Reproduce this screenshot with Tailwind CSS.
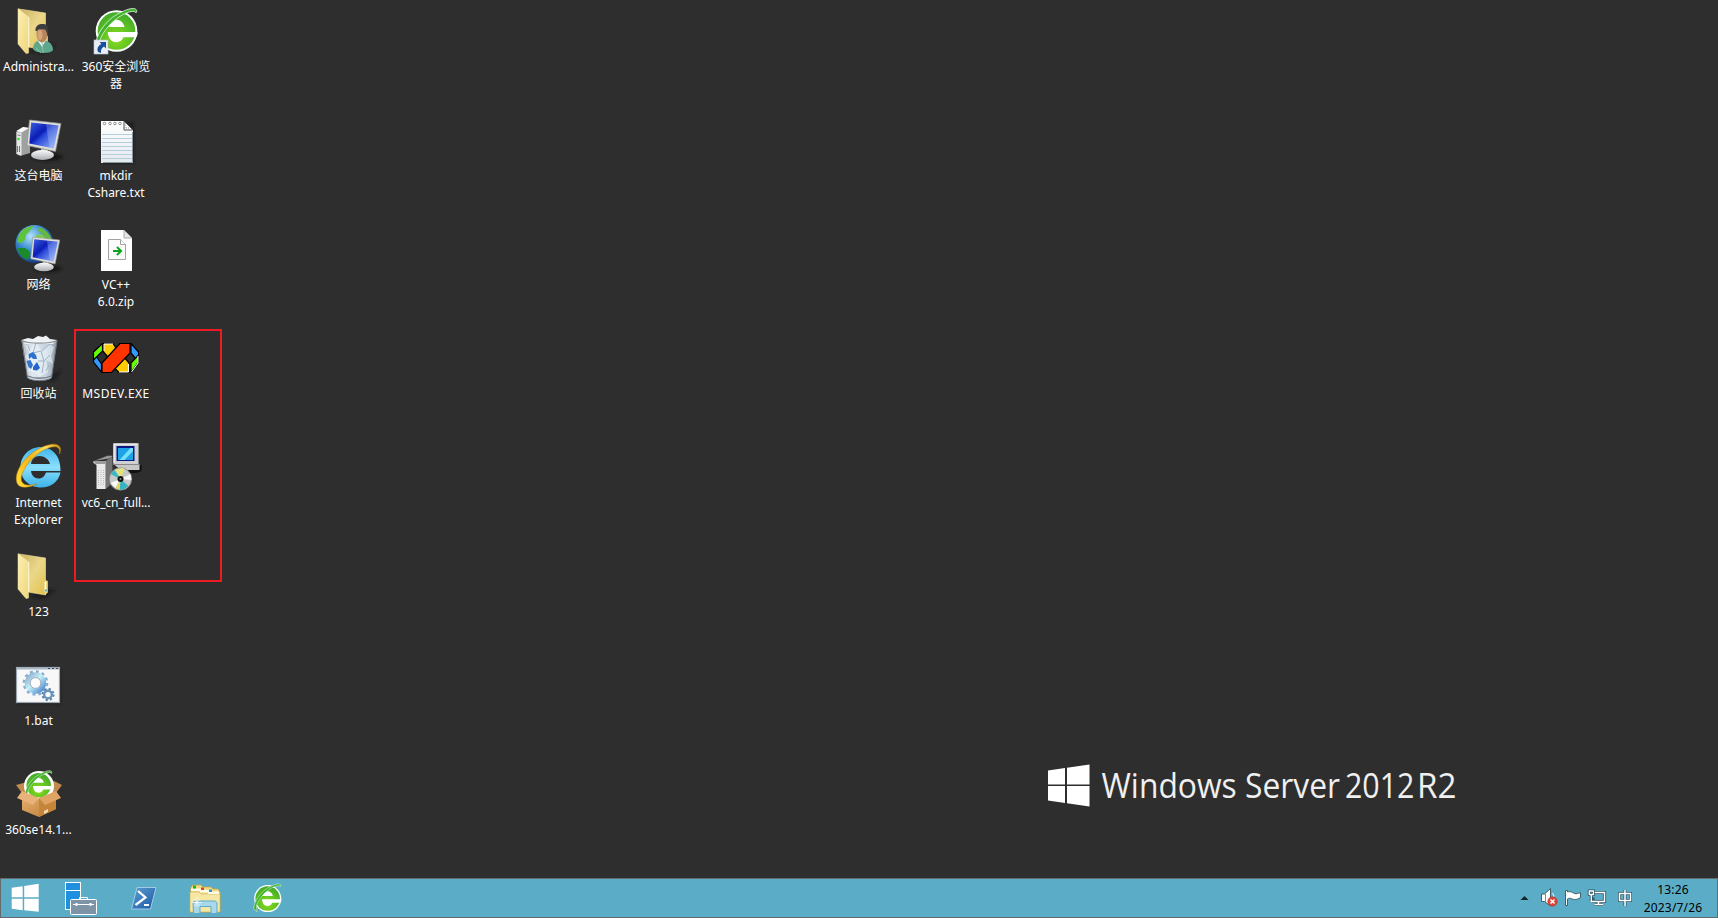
<!DOCTYPE html>
<html lang="zh-CN">
<head>
<meta charset="utf-8">
<title>Desktop</title>
<script src="https://cdn.jsdelivr.net/npm/@tailwindcss/browser@4"></script>
</head>
<body class="bg-[#2e2e2e] overflow-hidden">
<svg width="0" height="0" class="absolute">
  <defs>
    <linearGradient id="fold" x1="0" y1="0" x2="1" y2="1"><stop offset="0" stop-color="#c9b060"/><stop offset=".5" stop-color="#ead78a"/><stop offset="1" stop-color="#e3c24c"/></linearGradient>
    <linearGradient id="flap" x1="0" y1="0" x2="1" y2="1"><stop offset="0" stop-color="#fbf0b4"/><stop offset="1" stop-color="#f0d67c"/></linearGradient>
    <linearGradient id="scr" x1="0" y1="0" x2="1" y2="1"><stop offset="0" stop-color="#3d63e0"/><stop offset=".4" stop-color="#0a1cb4"/><stop offset=".5" stop-color="#2a48d8"/><stop offset="1" stop-color="#a8c4fa"/></linearGradient>
    <linearGradient id="metal" x1="0" y1="0" x2="0" y2="1"><stop offset="0" stop-color="#fafafa"/><stop offset="1" stop-color="#a9adb2"/></linearGradient>
    <radialGradient id="globe" cx=".4" cy=".3" r=".7"><stop offset="0" stop-color="#b4e2fa"/><stop offset=".5" stop-color="#3c8fd0"/><stop offset="1" stop-color="#153f86"/></radialGradient>
    <radialGradient id="green" cx=".5" cy=".7" r=".7"><stop offset="0" stop-color="#8ade1e"/><stop offset="1" stop-color="#3fa928"/></radialGradient>
    <linearGradient id="ie" x1="0" y1="0" x2="0" y2="1"><stop offset="0" stop-color="#3fb4ea"/><stop offset=".5" stop-color="#8ae0fd"/><stop offset="1" stop-color="#3cb2ea"/></linearGradient>
    <linearGradient id="gold" x1="0" y1="1" x2="1" y2="0"><stop offset="0" stop-color="#ffdf3c"/><stop offset=".5" stop-color="#f5b414"/><stop offset=".8" stop-color="#ffe25a"/><stop offset="1" stop-color="#c98a0c"/></linearGradient>
    <linearGradient id="gear" x1="0" y1="0" x2="1" y2="1"><stop offset="0" stop-color="#8fabc9"/><stop offset=".45" stop-color="#c4f2fa"/><stop offset="1" stop-color="#4a86cc"/></linearGradient>
    <linearGradient id="ps" x1="0" y1="0" x2="1" y2="1"><stop offset="0" stop-color="#5f9fd0"/><stop offset="1" stop-color="#1758a8"/></linearGradient>
    <linearGradient id="box" x1="0" y1="0" x2="1" y2="1"><stop offset="0" stop-color="#e8b070"/><stop offset="1" stop-color="#bd7f38"/></linearGradient>
    <linearGradient id="paper" x1="0" y1="0" x2="0" y2="1"><stop offset="0" stop-color="#ffffff"/><stop offset="1" stop-color="#e4e9ee"/></linearGradient>
    <linearGradient id="bin" x1="0" y1="0" x2="1" y2="0"><stop offset="0" stop-color="#aeb8c2"/><stop offset=".3" stop-color="#dfe8f0"/><stop offset=".7" stop-color="#c5d2de"/><stop offset="1" stop-color="#8d99a5"/></linearGradient>
    <filter id="soft" x="-50%" y="-50%" width="200%" height="200%"><feGaussianBlur stdDeviation="1.6"/></filter>
    <symbol id="folder" viewBox="0 0 40 50" overflow="visible">
      <path d="M10 43L32 36L38 37L26 46z" fill="#1c1c1c" filter="url(#soft)"/>
      <path d="M1 1L27.500 5V42L10 39z" fill="url(#fold)" stroke="#f3e3a0" stroke-width=".6"/>
      <path d="M27 27l2.800 1v11.500L27 42z" fill="#f3dd85"/>
      <path d="M27.300 29v10" stroke="#fff" stroke-width="1.400"/>
      <path d="M26.800 37.500h2" stroke="#48a8d8" stroke-width="2"/>
      <path d="M0 .5L10.500 9V45L8 45.500L0 36z" fill="url(#flap)" stroke="#f7e9a8" stroke-width=".5"/>
      <path d="M10.800 9v30" stroke="#fffbe0" stroke-width=".9"/>
    </symbol>
    <symbol id="e360" viewBox="0 0 44 46" overflow="visible">
      <circle cx="21.500" cy="23.500" r="21.300" fill="#fff"/>
      <circle cx="21.500" cy="23.500" r="19.300" fill="url(#green)"/>
      <path d="M13 19.500C14 14.800 17.500 12 21.300 12S28.800 14.800 29.600 19.500z" fill="#fff"/>
      <path d="M12.500 24.500H43V27L41.800 30H28.500C27.200 33.400 24.500 35 21.300 35C16.500 35 13 31 12.500 24.500z" fill="#fff"/>
      <path d="M-.5 38C1 28 9 14 22 6.500C31 1.300 39.500-1.500 42 2C42.500 3 42 4 41.500 5C40 2.200 34 3.500 27 7.300C16 13.500 7 25 4.500 33C3.700 36 4 40 5 44C2 42-.5 41-.5 38z" fill="#40b32a" stroke="#fff" stroke-width=".7"/>
    </symbol>
    <symbol id="monitor" viewBox="0 0 34 42" overflow="visible">
      <ellipse cx="20" cy="37" rx="16" ry="4" fill="#171717" filter="url(#soft)"/>
      <path d="M14 28L21 29L20 36H14z" fill="#b5b9bd"/>
      <ellipse cx="15.500" cy="35" rx="11.500" ry="5" fill="url(#metal)"/>
      <path d="M2.500 0L34 3.500L28.500 31.500L0 25.500z" fill="#dddeda" stroke="#8f928f" stroke-width=".7"/>
      <path d="M4.200 2.500L31.500 5.500L26.800 28.500L2.300 23.600z" fill="url(#scr)"/>
      <path d="M19 4.200L31.500 5.500L26.800 28.500L22.500 27.600z" fill="#bed5ff" opacity=".3"/>
    </symbol>
  </defs>
</svg>

<main class="relative flex h-[918px] w-[1718px] flex-col font-['Noto_Sans','Noto_Sans_CJK_SC',sans-serif] text-white">
  <section class="flex h-[878px] pt-1 text-center text-[12px] leading-[17px]">
    <div class="grid w-[77px] auto-rows-[109px] content-start">
      <div>
        <svg width="77" height="52">
          <use href="#folder" x="18" y="4" width="40" height="50"/>
          <path d="M33 45C33 39 37 36 42 36S53 39 53 46C51 50 36 50 33 45z" fill="#5fa68c"/>
          <path d="M38 37L42 43L46 36z" fill="#f2f2ee"/>
          <path d="M36 44L41 49M42 37L43 49" stroke="#8dcbb4" stroke-width=".8"/>
          <ellipse cx="42" cy="30" rx="5.500" ry="8.500" fill="#b7855c"/>
          <ellipse cx="40" cy="31" rx="2.500" ry="5" fill="#d5a67c"/>
          <path d="M35.500 27C35 21 40 19.500 43.500 20C48 20.500 49.500 25 47.500 32C47 29 46.500 27 45 25.500C41.500 25.500 38 24.500 37 27z" fill="#3b3d40"/>
        </svg>
        <p class="mt-[2px] whitespace-nowrap">Administra...</p>
      </div>
      <div>
        <svg width="77" height="52">
          <path d="M16.500 18L23 14L30 15V40L20 43L16.500 41z" fill="#9ea0a2"/>
          <path d="M16.500 19L21.500 20V42.500L16.500 41z" fill="#e5e6e6"/><path d="M16.500 18L23 14L29 15L21.500 19.500z" fill="#fafafa"/>
          <path d="M17.500 22l3 .5M17.500 33v6M19.500 33v6" stroke="#777" stroke-width="1"/><circle cx="18.500" cy="26" r="1.300" fill="#28e818"/>
          <use href="#monitor" x="27" y="7" width="34" height="42"/>
        </svg>
        <p class="mt-[2px]">这台电脑</p>
      </div>
      <div>
        <svg width="77" height="52">
          <circle cx="34.500" cy="22" r="19" fill="url(#globe)"/>
          <path d="M19 13C22 7 29 4 34 4L31 7L29 10L26 13L25 18L21 21L17 20z" fill="#5fc43b"/>
          <path d="M39 5C45 7 50 12 52 18L46 16L43 12L38 9z" fill="#68b63c"/>
          <path d="M18 26L25 26L30 30L28 38C22 36 18 31 18 26z" fill="#1b8b28"/>
          <path d="M36 13L42 12L47 17H35z" fill="#80cc52"/>
          <use href="#monitor" x="30.500" y="15" width="29.500" height="36"/>
        </svg>
        <p class="mt-[2px]">网络</p>
      </div>
      <div>
        <svg width="77" height="52">
          <path d="M50 45L62 38L55 49L45 51z" fill="#1c1c1c" filter="url(#soft)"/>
          <path d="M21.500 10H57L51.500 47C47 50.500 32 50.500 27.500 47z" fill="url(#bin)"/>
          <path d="M21.500 9L28 7L33 8L38 5L43 6L46 4.500L50 8L57 9L53 13H25z" fill="#eff3f6"/>
          <path d="M24 13L31 18L36 12L42 20L49 13L54 16L51 25L53 33L46 29L48 41L39 46L34 41L28 40L30 31L25 26L29 21z" fill="#f1f7fc" opacity=".55"/>
          <path d="M36 12L33 22L41 20L44 30L50 24M42 20L50 13M42 42L44 30L38 30M28 15L30 20M46 40L49 34" fill="none" stroke="#9fb2c6" stroke-width="1"/>
          <path d="M21.300 9.500C28 13 50 13 57.200 9.500" fill="none" stroke="#878e95" stroke-width="1.300"/>
          <path d="M22 10L27.500 47C33 50.500 46 50.500 51.500 47L57 10" fill="none" stroke="#6b737b" stroke-width="1"/>
          <path d="M28 45C34 48 45 48 51 45" stroke="#72797f" stroke-width="1.300" fill="none"/>
          <path d="M28.500 23L33 21L36 24L37 28L33 28L31.500 26L29 28z" fill="#2c70d0"/>
          <path d="M26.500 30L30.500 29L33 34L31 38L28.500 36z" fill="#3474cf"/>
          <path d="M33 36L37 31L40 37L37 39.500L33 39z" fill="#2365c9"/>
        </svg>
        <p class="mt-[2px]">回收站</p>
      </div>
      <div>
        <svg width="77" height="52">
          <path d="M60.500 32.500H46C44.500 37 41.500 38.500 38.500 38.500C34.500 38.500 31.500 35.500 31 31H60.500C61 16 52 7 41 7C29 7 20.500 16 20.500 27.500C20.500 39 29 47.500 41 47.500C51 47.500 58.500 41.500 60.500 32.500zM31 24C31.500 19 35 16 39.500 16S49 19 50 24z" fill="url(#ie)"/>
          <path d="M59.500 14C63 5.500 57 1.500 45 6C27 12.500 13 31 17 43C19 49 29 48 37 44C30 46 24 45.500 22 42C18 34 32 15 46 9C55 5 61 6 59.500 14z" fill="url(#gold)" stroke="#b77b0a" stroke-width=".5"/>
        </svg>
        <p class="mt-[2px]">Internet<br><span class="tracking-[0.2px]">Explorer</span></p>
      </div>
      <div>
        <svg width="77" height="52"><use href="#folder" x="18" y="4" width="40" height="50"/></svg>
        <p class="mt-[2px]">123</p>
      </div>
      <div>
        <svg width="77" height="52">
          <rect x="17" y="11" width="44" height="35" fill="#191919" opacity=".6" filter="url(#soft)"/>
          <rect x="16.500" y="9.500" width="43" height="35" fill="#f8f8f8" stroke="#9ba5b0" stroke-width="1.200"/>
          <path d="M17 10.500H59" stroke="#aab7c5" stroke-width="2"/><path d="M48 10.500h2M52 10.500h2M56 10.500h2" stroke="#3e4a58" stroke-width="1"/>
          <circle cx="35.500" cy="25" r="11.500" fill="none" stroke="#86aed2" stroke-width="2.600" stroke-dasharray="3.010 3.010"/>
          <circle cx="35.500" cy="25" r="8.200" fill="none" stroke="url(#gear)" stroke-width="5"/>
          <circle cx="35.500" cy="25" r="5.400" fill="#fcfcfc" stroke="#7c92aa" stroke-width=".8"/>
          <circle cx="48" cy="36.500" r="5.500" fill="none" stroke="#547da7" stroke-width="2" stroke-dasharray="2.160 2.160"/>
          <circle cx="48" cy="36.500" r="3.800" fill="#fcfcfc" stroke="#6894bd" stroke-width="2.400"/>
        </svg>
        <p class="mt-[2px]">1.bat</p>
      </div>
      <div>
        <svg width="77" height="52">
          <path d="M16 18L31 14L39 19L54 14L62 18L56 26H22z" fill="#c08a50"/>
          <circle cx="39" cy="19" r="15" fill="#fff"/>
          <use href="#e360" x="25" y="3" width="28" height="30"/>
          <path d="M22 27L39 32L56 26V42L39 50L22 43z" fill="url(#box)"/><path d="M39 31L56 26V42L39 50z" fill="#c58639"/>
          <path d="M22 24L39 31L33 38L17 31z" fill="#e8b279"/><path d="M56 24L39 31L45 38L61 31z" fill="#e0a465"/>
          <path d="M44 44L48 42V45L44 47z" fill="#f0d9b5"/>
        </svg>
        <p class="mt-[2px] whitespace-nowrap">360se14.1...</p>
      </div>
    </div>
    <div class="grid w-[78px] auto-rows-[109px] content-start">
      <div>
        <svg width="78" height="52">
          <use href="#e360" x="18.500" y="4" width="43" height="45"/>
          <rect x="17" y="36" width="14" height="14" fill="#e9eef5" stroke="#b9c4d0" stroke-width=".6"/>
          <path d="M22.500 38H29V44.500L27 42.500C24.500 44 23.500 46 24 49L21 48C19.500 44 21.500 41.500 24.500 40z" fill="#194f9a"/>
        </svg>
        <p class="mt-[2px] px-1">360安全浏览<br>器</p>
      </div>
      <div>
        <svg width="78" height="52">
          <g transform="translate(1 0)">
            <rect x="24" y="9" width="32" height="42" fill="#171717" opacity=".6" filter="url(#soft)"/>
            <path d="M23 8H46L55 17V50H23z" fill="url(#paper)"/>
            <path d="M24 21.500H54M24 25.500H54M24 29.500H54M24 33.500H54M24 37.500H54M24 41.500H54M24 45.500H54" stroke="#b4cede" stroke-width="1"/>
            <path d="M25 49.500H54.500V19" stroke="#8d979e" stroke-width="1" fill="none"/>
            <path d="M46 8V17H55z" fill="#fafafa" stroke="#4b5054" stroke-width="1"/>
            <path d="M47 10V15H52" stroke="#858b90" stroke-width="1" stroke-dasharray="1 1" fill="none"/>
            <g fill="none" stroke="#777" stroke-width=".8"><circle cx="26.500" cy="10.500" r="1.300"/><circle cx="32" cy="10.500" r="1.300"/><circle cx="37" cy="10.500" r="1.300"/><circle cx="42" cy="10.500" r="1.300"/></g>
          </g>
        </svg>
        <p class="mt-[2px]">mkdir<br>Cshare.txt</p>
      </div>
      <div>
        <svg width="78" height="52">
          <g transform="translate(1 0)">
            <path d="M23 8H46L54 16V49H23z" fill="#fff"/>
            <path d="M46 8V16H54z" fill="#e6e6e6" stroke="#999" stroke-width=".8"/>
            <path d="M30.500 17.500H42.500L47.500 22.500V37.500H30.500z" fill="#fafafa" stroke="#a3a3a3"/>
            <path d="M42.500 17.500V22.500H47.500" fill="#fff" stroke="#a3a3a3"/>
            <path d="M35 29H42M39 25L43 29L39 33" fill="none" stroke="#0aa41c" stroke-width="2"/>
          </g>
        </svg>
        <p class="mt-[2px]">VC++<br>6.0.zip</p>
      </div>
      <div>
        <svg width="78" height="52">
          <g stroke="#000" stroke-width="1.200" stroke-linejoin="round">
            <path d="M17 22L24.500 33V41L16.500 31z" fill="#3399ff"/>
            <path d="M16.500 29L25.500 20V12.500L16.500 21z" fill="#66ff00"/>
            <path d="M54 12.500L61.500 21V31L54 22z" fill="#3399ff"/>
            <path d="M61.500 24V31L54 41.500V32z" fill="#66ff00"/>
            <path d="M26.500 12.500H36L39 17L31 26L26.500 21z" fill="#ffcc00"/>
            <path d="M47 26L52 32V41.500H42L37.500 37z" fill="#ffcc00"/>
            <path d="M43 12.500H53V22L34.500 41.500H25V32z" fill="#ff3300"/>
          </g>
          <path d="M27 20V13H36M42 41H51.500V33M54.500 41L61 32V25" fill="none" stroke="#fff" stroke-width="1"/>
        </svg>
        <p class="mt-[2px] whitespace-nowrap tracking-[0.5px]">MSDEV.EXE</p>
      </div>
      <div>
        <svg width="78" height="52">
          <g transform="translate(1.500 0)">
            <path d="M36 25H63V31L58 33H44z" fill="#111"/><path d="M35 24L61 24V30H42z" fill="#c8c8c8"/>
            <rect x="35" y="3.500" width="25" height="21" fill="#cfd0d2" stroke="#888" stroke-width="1"/><path d="M35.500 23V4H59" stroke="#fff" fill="none"/>
            <rect x="38" y="6" width="18" height="15" fill="#0b1783"/><rect x="39.500" y="8" width="15" height="12" fill="#1da2e5"/><path d="M41 20L52 8H54.500V11L46 20z" fill="#74e0fa"/>
            <path d="M15 21L29 15.500H34V17L27 21V49L34 43V18" fill="#999" stroke="#333" stroke-width=".5"/>
            <path d="M27 21L33.500 17V43L27 49z" fill="#747474"/>
            <path d="M15 21H27V49H18V25L15 23z" fill="#e9e9e9"/><path d="M15 21H27V24H17z" fill="#9b9b9b"/>
            <path d="M20 30V46M22.500 30V46M25 30V46" stroke="#bbb" stroke-width="1" stroke-dasharray="1 1"/>
            <circle cx="42" cy="39" r="11.200" fill="#c6c9c8" stroke="#777" stroke-width=".7"/>
            <path d="M42 39L37 29.500L44 28L46 29z" fill="#e6e27a"/><path d="M42 39L32 34L36 30z" fill="#38b8c4"/><path d="M42 39L50 46L45 49.500L41 50z" fill="#38b4c0"/><path d="M42 39L52 34L53 40z" fill="#f7f7f7"/><path d="M42 39L32 43L37 48z" fill="#fafafa"/><path d="M42 39L41 50L37 48z" fill="#e1d66a"/>
            <circle cx="42" cy="39" r="3" fill="#111"/><circle cx="42" cy="39" r="1" fill="#888"/>
          </g>
        </svg>
        <p class="mt-[2px] whitespace-nowrap tracking-[-0.1px]">vc6_cn_full...</p>
      </div>
    </div>
  </section>

  <!-- Selection frame over the desktop -->
  <div class="absolute left-[74px] top-[329px] h-[253px] w-[148px] border-2 border-[#ed1c24]"></div>

  <!-- Wallpaper brand -->
  <svg class="absolute left-[1040px] top-[755px]" width="425" height="60" role="img">
    <path d="M8 15.500L25 13V29.500H8zM27 12.700L49.500 9.500V29.500H27zM8 31H25V48L8 45.500zM27 31H49.500V51.500L27 48.300z" fill="#fff"/>
    <g fill="#f0f0f0" font-family="'Open Sans'" font-size="35.500">
      <text x="61.500" y="43" textLength="238.500" lengthAdjust="spacingAndGlyphs">Windows Server</text>
      <text x="305" y="43" textLength="69.500" lengthAdjust="spacingAndGlyphs">2012</text>
      <text x="377" y="43" textLength="39.500" lengthAdjust="spacingAndGlyphs">R2</text>
    </g>
  </svg>

  <footer class="flex h-10 items-center justify-between border border-[#666a6c] bg-[#5badc7]">
    <svg width="299" height="38">
      <path d="M11 8.500L22 7V18H11zM23.500 6.800L38 4.500V18H23.500zM11 19.500H22V31L11 29.500zM23.500 19.500H38V32.500L23.500 31z" fill="#fff" transform="translate(-.3 .2)"/>
      <rect x="64.500" y="3.500" width="15" height="27" fill="#1f8fe0" stroke="#fff"/><path d="M64 11.500H80" stroke="#fff"/>
      <rect x="69.500" y="20.500" width="26" height="15" rx="1" fill="#7d94a7" stroke="#fff"/>
      <path d="M78.500 20V18.500H86.500V20" fill="none" stroke="#fff"/><path d="M72 25.500H93" stroke="#fff"/><circle cx="75.500" cy="25.500" r="1.400" fill="#fff"/><circle cx="89.500" cy="25.500" r="1.400" fill="#fff"/>
      <path d="M136 8.500H155L149.500 30H130.500z" fill="url(#ps)" stroke="#a4cbe6" stroke-width="1"/>
      <path d="M137 12L144.500 18.500L134.500 26M143 26H148" fill="none" stroke="#fff" stroke-width="2.200"/>
      <path d="M190 8L192 6H200L202 8H210L212 10H217L219 13V33H189z" fill="#f1dc85" stroke="#c5a647" stroke-width=".8"/>
      <path d="M189 13H198L200 15H219V33H189z" fill="#f6e7a2" stroke="#c4a54b" stroke-width=".5"/>
      <path d="M190 9.500H202V12H190zM199 11H211V13.500H199zM207 12.500H218V15H207z" fill="#fffbe6"/>
      <path d="M192 6.500h3v3h-3z" fill="#13b822"/><path d="M200 8.500h3v2.500h-3z" fill="#cf4634"/><path d="M208 10.500h3v2.500h-3z" fill="#2996dc"/>
      <path d="M192 23.500L194 22H214L216 23.500V34.500H210V27.500H199V34.500H192.500z" fill="#a8d9eb" stroke="#5da9ce" stroke-width="1"/>
      <path d="M196 18V28M191 23.500H201M193 20L199 27M199 20L193 27" stroke="#fff" stroke-width=".7"/>
      <use href="#e360" x="253" y="4.500" width="28" height="29.500"/>
    </svg>
    <div class="flex items-center text-[12px] leading-[18px] text-black">
      <svg width="122" height="38">
        <path d="M3.500 21L7.500 17L11.500 21z" fill="#14242b"/>
        <path d="M24.500 15H27.500L33.500 9.500V27L27.500 22.500H24.500z" fill="#fff" stroke="#3e5e6c" stroke-width="1"/><path d="M28.500 15V23" stroke="#6f929f"/><path d="M35.500 14C37 16 37 18 36.500 20" fill="none" stroke="#fff"/>
        <circle cx="35.500" cy="22.500" r="4.700" fill="#dc4433" stroke="#b82c21" stroke-width=".6"/><path d="M33.500 20.500L37.500 24.500M37.500 20.500L33.500 24.500" stroke="#fff" stroke-width="1.500"/>
        <path d="M48.500 11.500V26.500H50.500V20C53 18 55 20.500 57.500 20.500C60 20.500 61 20 63.500 18.500V13.500C61 14.500 60 15 57.500 14.500C55 13 53 12 50.500 13V11.500z" fill="#fff" stroke="#36535f" stroke-width=".9"/>
        <path d="M78 13.500H87.500V22.500H76V18.500M81.500 22.500V26M77.500 25.500H86" fill="none" stroke="#315767" stroke-width="3.200"/>
        <path d="M72.300 12H76.500V15.500H72.300zM74.300 16V22" fill="none" stroke="#315767" stroke-width="3"/>
        <path d="M78 13.500H87.500V22.500H76M81.500 22.500V26M77.500 25.500H86" fill="none" stroke="#fff" stroke-width="1.400"/><path d="M72.300 12H76.500V15.500H72.300zM74.300 16V22.500H77" fill="none" stroke="#fff" stroke-width="1.300"/>
        <path d="M102.500 14.500H113.500V21.500H102.500zM108 11V27" fill="none" stroke="#315767" stroke-width="3"/><path d="M102.500 14.500H113.500V21.500H102.500zM108 11V27" fill="none" stroke="#fff" stroke-width="1.500"/>
      </svg>
      <p class="ml-[3px] mr-[13px] mt-[2px] w-[62px] text-center tracking-[0.15px]">13:26<br>2023/7/26</p>
    </div>
  </footer>
</main>
</body>
</html>
